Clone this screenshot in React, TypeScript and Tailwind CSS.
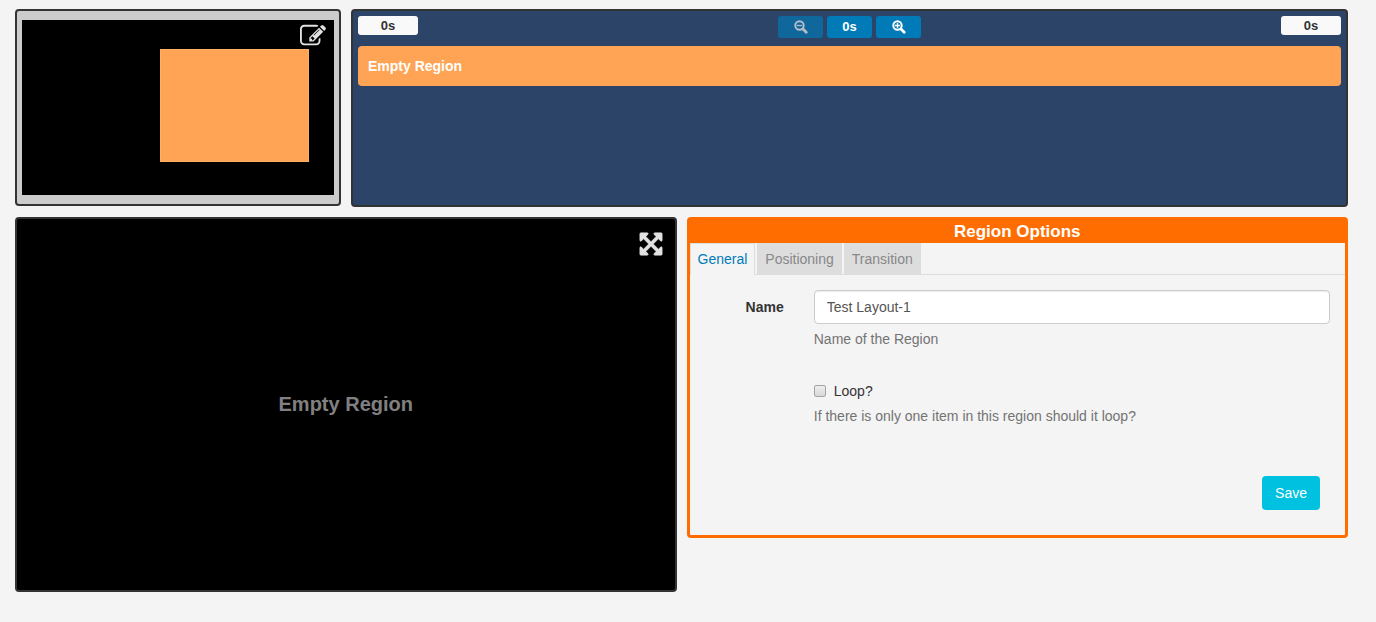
import { useState } from "react";

function EditIcon() {
  return (
    <svg viewBox="0 0 1792 1792" className="size-[26px]" fill="currentColor" aria-hidden="true">
      <path d="M888 1184l116-116-152-152-116 116v56h96v96h56zm440-720q-16-16-33 1l-350 350q-17 17-1 33t33-1l350-350q17-17 1-33zm80 594v190q0 119-84.500 203.500t-203.500 84.500h-832q-119 0-203.500-84.500t-84.500-203.500v-832q0-119 84.500-203.500t203.500-84.500h832q63 0 117 25 15 7 18 23 3 17-9 29l-49 49q-14 14-32 8-23-6-45-6h-832q-66 0-113 47t-47 113v832q0 66 47 113t113 47h832q66 0 113-47t47-113v-126q0-13 9-22l64-64q15-15 35-7t20 29zm-96-738l288 288-672 672h-288v-288zm444 132l-92 92-288-288 92-92q28-28 68-28t68 28l152 152q28 28 28 68t-28 68z" />
    </svg>
  );
}

function ExpandIcon() {
  return (
    <svg viewBox="0 0 1792 1792" className="size-[26px]" fill="currentColor" stroke="currentColor" strokeWidth="40" aria-hidden="true">
      <path d="M1411 541l-355 355 355 355 144-144q29-31 70-14 39 17 39 59v448q0 26-19 45t-45 19h-448q-42 0-59-40-17-39 14-69l144-144-355-355-355 355 144 144q31 30 14 69-17 40-59 40h-448q-26 0-45-19t-19-45v-448q0-42 40-59 39-17 69 14l144 144 355-355-355-355-144 144q-19 19-45 19-12 0-24-5-40-17-40-59v-448q0-26 19-45t45-19h448q42 0 59 40 17 39-14 69l-144 144 355 355 355-355-144-144q-31-30-14-69 17-40 59-40h448q26 0 45 19t19 45v448q0 42-39 59-13 5-25 5-26 0-45-19z" />
    </svg>
  );
}

function ZoomIcon({ plus = false }: { plus?: boolean }) {
  return (
    <svg viewBox="0 0 14 14" className="size-[14px]" fill="none" stroke="currentColor" aria-hidden="true">
      <circle cx="5.500" cy="5.500" r="4.200" strokeWidth="2" />
      <path d="M9 9l3.200 3.200" strokeWidth="2.800" strokeLinecap="round" />
      <path d={plus ? "M3 5.500h5M5.500 3v5" : "M3 5.500h5"} strokeWidth="1.300" />
    </svg>
  );
}

const timelineButton =
  "flex h-[22px] w-[45px] items-center justify-center rounded-[3px] bg-[#007bb8] text-[13px] font-bold text-white";
const timeLabel = "h-[19px] w-[60px] rounded-[3px] bg-[#f9f9f9] text-center text-[13px] leading-[19px] font-bold";

const tabs = ["General", "Positioning", "Transition"];

export default function App() {
  const [tab, setTab] = useState("General");
  const [name, setName] = useState("Test Layout-1");

  return (
    <main className="flex min-h-screen flex-col gap-[10px] bg-[#f4f4f4] pt-[9px] pr-[28px] pb-[30px] pl-[15px] font-['Liberation_Sans',Arial,sans-serif] text-[14px] leading-[20px] text-[#333]">
      <div className="flex items-start gap-[10px]">
        <section className="w-[326px] shrink-0 rounded-[4px] border-2 border-[#333] bg-[#ccc] px-[5px] py-[9px]">
          <div className="relative h-[175px] bg-black">
            <div className="absolute top-[29px] left-[138px] h-[113px] w-[149px] border border-[#ffb066] bg-[#ffa454]" />
            <button type="button" aria-label="Edit layout" className="absolute top-[3px] right-[8px] text-[#e2e2e2]">
              <EditIcon />
            </button>
          </div>
        </section>

        <section className="min-h-[198px] flex-1 rounded-[4px] border-2 border-[#333] bg-[#2c4468] p-[5px]">
          <div className="flex items-start justify-between">
            <div className={timeLabel}>0s</div>
            <div className="flex gap-1">
              <button type="button" disabled aria-label="Zoom out" className={`${timelineButton} opacity-65`}>
                <ZoomIcon />
              </button>
              <button type="button" className={timelineButton}>0s</button>
              <button type="button" aria-label="Zoom in" className={timelineButton}>
                <ZoomIcon plus />
              </button>
            </div>
            <div className={timeLabel}>0s</div>
          </div>
          <div className="mt-2 rounded-[4px] bg-[#ffa454] px-[10px] py-[10px] font-bold text-white">Empty Region</div>
        </section>
      </div>

      <div className="grid grid-cols-2 items-start gap-[10px]">
        <section className="relative flex h-[375px] items-center justify-center rounded-[4px] border-2 border-[#333] bg-black pb-[2px]">
          <p className="text-[20px] font-bold text-[#808080]">Empty Region</p>
          <button type="button" aria-label="Full screen" className="absolute top-[12px] right-[11px] text-[#e2e2e2]">
            <ExpandIcon />
          </button>
        </section>

        <section className="rounded-[4px] border-[3px] border-[#ff6d00]">
          <h2 className="bg-[#ff6d00] text-center text-[17px] leading-[23px] font-bold text-white">Region Options</h2>
          <div role="tablist" className="flex gap-[2px] border-b border-[#ddd]">
            {tabs.map((item) => (
              <button
                key={item}
                type="button"
                role="tab"
                aria-selected={tab === item}
                onClick={() => setTab(item)}
                className={
                  tab === item
                    ? "-mb-px h-[32px] border-x border-t border-[#ddd] bg-[#f4f4f4] px-[7px] pb-[2px] text-[#007bb8]"
                    : "h-[31px] bg-[#ddd] px-2 text-[#888]"
                }
              >
                {item}
              </button>
            ))}
          </div>

          <form onSubmit={(event) => event.preventDefault()}>
            <div className="grid grid-cols-12 pt-[15px]">
              <label htmlFor="region-name" className="col-span-2 pt-[7px] pr-[15px] text-right font-bold">
                Name
              </label>
              <div className="col-span-10 px-[15px]">
                <input
                  id="region-name"
                  type="text"
                  value={name}
                  onChange={(event) => setName(event.target.value)}
                  className="block h-[34px] w-full rounded-[4px] border border-[#ccc] bg-white px-3 text-[#555] shadow-[inset_0_1px_1px_rgba(0,0,0,0.075)]"
                />
                <p className="mt-[5px] text-[#737373]">Name of the Region</p>
                <label className="mt-8 flex w-fit items-center gap-2">
                  <input
                    type="checkbox"
                    className="size-[12px] appearance-none rounded-[2px] border border-[#a5a5a5] bg-linear-to-b from-[#eee] to-[#d8d8d8] checked:bg-[#007bb8]"
                  />
                  Loop?
                </label>
                <p className="mt-[5px] text-[#737373]">If there is only one item in this region should it loop?</p>
              </div>
            </div>
            <div className="mt-[50px] flex justify-end pr-[25px] pb-[25px]">
              <button type="submit" className="h-[34px] rounded-[4px] bg-[#00c1e0] px-[13px] text-white">
                Save
              </button>
            </div>
          </form>
        </section>
      </div>
    </main>
  );
}
